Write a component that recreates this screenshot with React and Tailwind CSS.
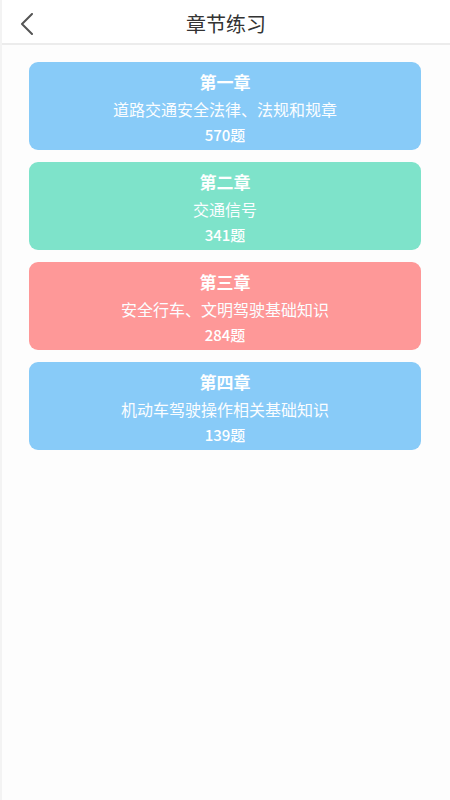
import React from 'react'

const chapters = [
  { title: '第一章', name: '道路交通安全法律、法规和规章', count: 570, color: 'bg-[#88cbf8]' },
  { title: '第二章', name: '交通信号', count: 341, color: 'bg-[#7ee3ca]' },
  { title: '第三章', name: '安全行车、文明驾驶基础知识', count: 284, color: 'bg-[#fe9898]' },
  { title: '第四章', name: '机动车驾驶操作相关基础知识', count: 139, color: 'bg-[#88cbf8]' },
]

const App = () => {
  return (
    <div
      className="min-h-[800px] bg-[#fdfdfd] border-l-2 border-[#f3f3f3]"
      style={{ fontFamily: '"Noto Sans CJK SC", "Noto Sans", sans-serif' }}
    >
      {/* Header */}
      <div className="h-[45px] bg-white border-b-2 border-[#ececec] flex items-center relative">
        <button className="absolute left-[14px] top-[12px] w-[22px] h-[24px] flex items-center justify-center">
          <svg width="14" height="22" viewBox="0 0 14 22" fill="none">
            <path d="M12 1 L2 11 L12 21" stroke="#555" strokeWidth="2" strokeLinecap="round" strokeLinejoin="round" />
          </svg>
        </button>
        <h1 className="flex-1 text-center text-[20px] text-[#333] leading-none pt-[5px]">章节练习</h1>
      </div>

      {/* Chapter list */}
      <div className="flex flex-col gap-[12px] pl-[27px] pr-[29px] pt-[17px]">
        {chapters.map((c) => (
          <div
            key={c.title}
            className={`${c.color} h-[88px] rounded-[9px] flex flex-col items-center pt-[7px] text-white`}
          >
            <div className="text-[17px] font-bold leading-[26px]">{c.title}</div>
            <div className="text-[16px] leading-[28px] text-[#fbfdff]">{c.name}</div>
            <div className="text-[15px] font-medium leading-[24px]">{c.count}题</div>
          </div>
        ))}
      </div>
    </div>
  )
}

export default App
